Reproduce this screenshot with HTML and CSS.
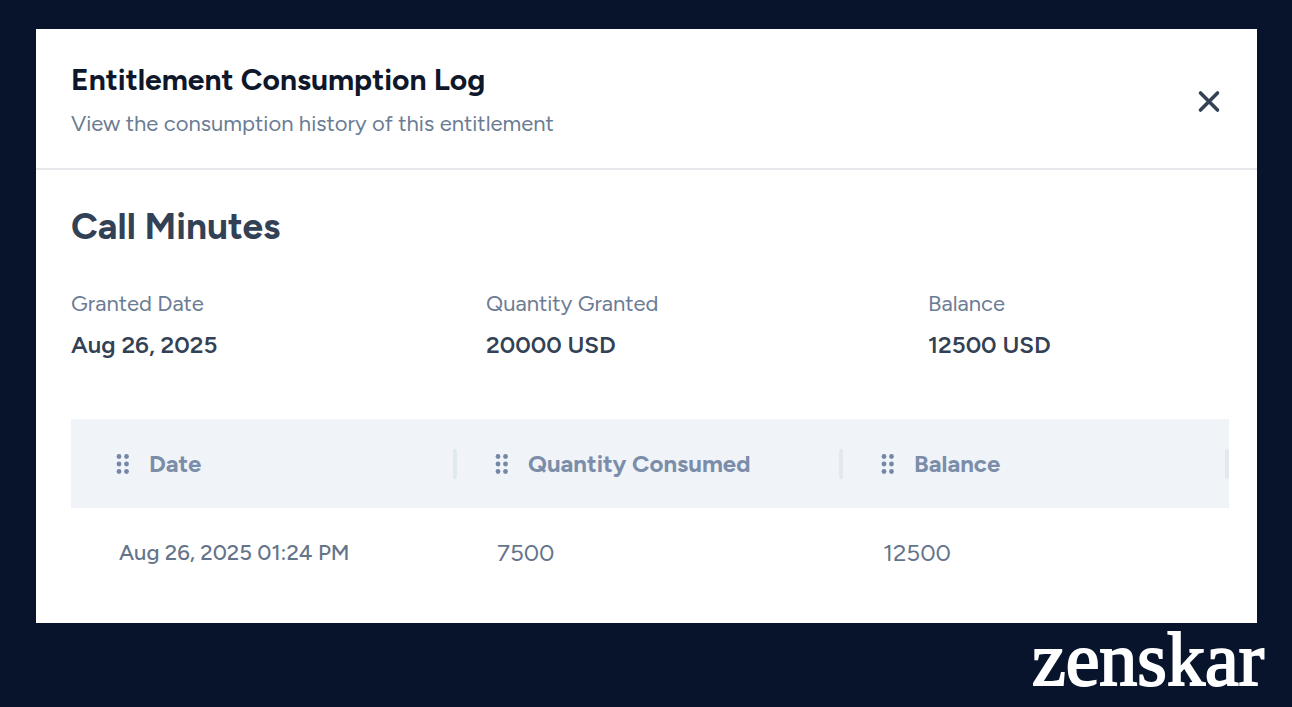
FILE: index.html
```html
<!DOCTYPE html>
<html lang="en">
<head>
    <meta charset="UTF-8">
    <meta name="viewport" content="width=device-width, initial-scale=1.0">
    <title>Entitlement Consumption Log</title>
    <link rel="stylesheet" href="styles.css">
</head>
<body>
    <!-- Grip icon shared by the column headers -->
    <svg class="sprite" aria-hidden="true">
        <symbol id="grip" viewBox="0 0 14 22">
            <circle cx="3" cy="3.5" r="2.4"/>
            <circle cx="10.5" cy="3.5" r="2.4"/>
            <circle cx="3" cy="11" r="2.4"/>
            <circle cx="10.5" cy="11" r="2.4"/>
            <circle cx="3" cy="18.5" r="2.4"/>
            <circle cx="10.5" cy="18.5" r="2.4"/>
        </symbol>
    </svg>

    <main class="panel">
        <header class="panel-header">
            <div>
                <h1>Entitlement Consumption Log</h1>
                <p class="subtitle">View the consumption history of this entitlement</p>
            </div>
            <button type="button" class="close-btn" aria-label="Close">
                <svg width="24" height="24" viewBox="0 0 24 24">
                    <path d="M3.5 3L20.5 20M20.5 3L3.5 20"/>
                </svg>
            </button>
        </header>

        <div class="panel-body">
            <h2>Call Minutes</h2>

            <dl class="summary">
                <div>
                    <dt>Granted Date</dt>
                    <dd>Aug 26, 2025</dd>
                </div>
                <div>
                    <dt>Quantity Granted</dt>
                    <dd>20000 USD</dd>
                </div>
                <div>
                    <dt>Balance</dt>
                    <dd>12500 USD</dd>
                </div>
            </dl>

            <table class="log">
                <thead>
                    <tr>
                        <th><div class="col-head"><svg class="grip"><use href="#grip"/></svg><span>Date</span><i class="resizer"></i></div></th>
                        <th><div class="col-head"><svg class="grip"><use href="#grip"/></svg><span>Quantity Consumed</span><i class="resizer"></i></div></th>
                        <th><div class="col-head"><svg class="grip"><use href="#grip"/></svg><span>Balance</span><i class="resizer"></i></div></th>
                    </tr>
                </thead>
                <tbody>
                    <tr>
                        <td class="date">Aug 26, 2025 01:24 PM</td>
                        <td>7500</td>
                        <td>12500</td>
                    </tr>
                </tbody>
            </table>
        </div>
    </main>

    <footer class="brand">zenskar</footer>
</body>
</html>
```

FILE: styles.css
```css
* {
    box-sizing: border-box;
}

body {
    margin: 0;
    padding: 29px 35px 0 36px;
    background-color: #07142b;
    font-family: Figtree, Lato, sans-serif;
    color: #64748b;
}

h1, h2, p, dl, dd {
    margin: 0;
}

.sprite {
    display: none;
}

.panel {
    background-color: white;
}

/* Header */
.panel-header {
    display: flex;
    justify-content: space-between;
    align-items: center;
    padding: 33px 36px 26px 35px;
    border-bottom: 2px solid #e5e7eb;
}

h1 {
    font-size: 30px;
    line-height: 36px;
    color: #0f172a;
}

.subtitle {
    margin-top: 8px;
    font-size: 22px;
    line-height: 36px;
    color: #6b7c93;
}

.close-btn {
    display: flex;
    padding: 0;
    border: none;
    background: none;
    cursor: pointer;
}

.close-btn path {
    fill: none;
    stroke: #334155;
    stroke-width: 3.6;
    stroke-linecap: round;
}

/* Content */
.panel-body {
    padding: 32px 28px 26px 35px;
}

h2 {
    font-size: 37px;
    line-height: 48px;
    color: #334155;
}

.summary {
    display: grid;
    grid-template-columns: 415fr 442fr 301fr;
    margin: 36px 0 55px;
}

.summary dt {
    font-size: 22px;
    line-height: 36px;
    color: #6b7c93;
}

.summary dd {
    margin-top: 4px;
    font-size: 24px;
    line-height: 38px;
    font-weight: 600;
    color: #334155;
}

/* Log table */
.log {
    width: 100%;
    table-layout: fixed;
    border-collapse: collapse;
    text-align: left;
}

.log th {
    height: 89px;
    padding: 0 0 0 38px;
    background-color: #f0f3f8;
    font-size: 24px;
    color: #7b8da9;
}

.log th:first-child {
    padding-left: 45px;
}

.col-head {
    display: flex;
    align-items: center;
}

.grip {
    width: 14px;
    height: 22px;
    margin-right: 19px;
    fill: #7487a5;
}

.resizer {
    width: 4px;
    height: 30px;
    margin-left: auto;
    border-radius: 2px;
    background-color: #e0e8f0;
}

.log td {
    height: 89px;
    padding: 0 0 0 40px;
    font-size: 24px;
}

.log td:first-child {
    padding-left: 48px;
}

.log .date {
    font-size: 22px;
    font-weight: 500;
}

/* Wordmark */
.brand {
    margin-right: -7px;
    font-family: "Liberation Serif", serif;
    font-size: 76px;
    line-height: 72px;
    text-align: right;
    color: white;
    -webkit-text-stroke: 2px white;
}
```
